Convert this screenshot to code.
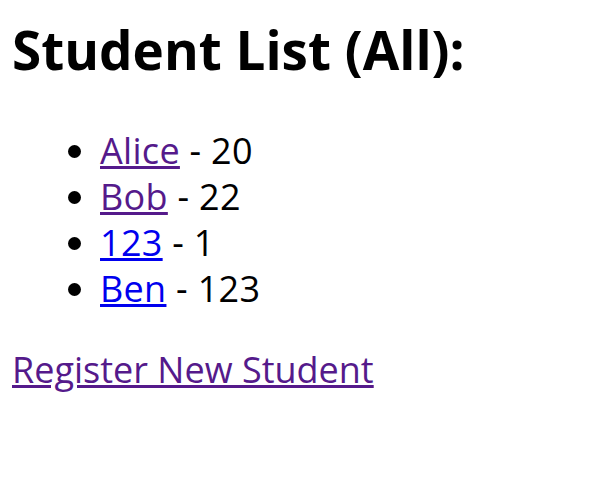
const students = [
  { name: "Alice", age: 20, visited: true },
  { name: "Bob", age: 22, visited: true },
  { name: "123", age: 1, visited: false },
  { name: "Ben", age: 123, visited: false },
]

export default function App() {
  return (
    <div className="px-[12px] text-black" style={{ fontFamily: '"Open Sans", "Noto Sans", sans-serif' }}>
      <h1 className="mt-[18px] text-[53px] font-bold leading-[64px]">Student List (All):</h1>
      <ul className="mt-[46px] list-disc pl-[88px] text-[36px] leading-[46px] tracking-[0.3px]">
        {students.map((s) => (
          <li key={s.name}>
            <a href="#" className={s.visited ? "text-[#551a8b] underline" : "text-[#0000ee] underline"}>
              {s.name}
            </a>{" "}
            - {s.age}
          </li>
        ))}
      </ul>
      <p className="mt-[35px] text-[36px] leading-[46px]">
        <a href="#" className="text-[#551a8b] underline">
          Register New Student
        </a>
      </p>
    </div>
  )
}
